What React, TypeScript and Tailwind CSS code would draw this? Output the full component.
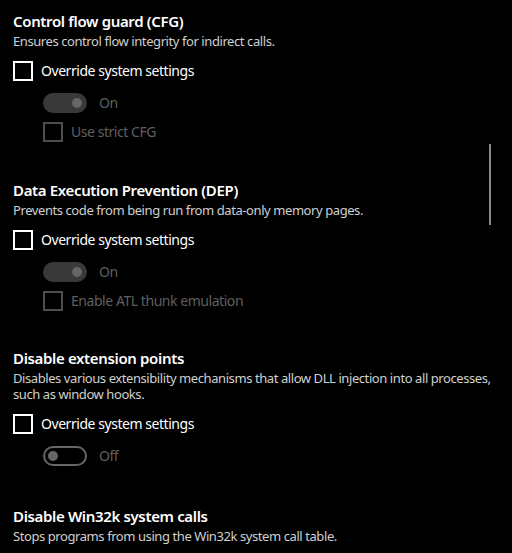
import React from "react";

interface Section {
  title: string;
  desc: string;
  toggleOn: boolean;
  sub?: string;
  gapTop: string;
}

const sections: Section[] = [
  {
    title: "Control flow guard (CFG)",
    desc: "Ensures control flow integrity for indirect calls.",
    toggleOn: true,
    sub: "Use strict CFG",
    gapTop: "mt-[11px]",
  },
  {
    title: "Data Execution Prevention (DEP)",
    desc: "Prevents code from being run from data-only memory pages.",
    toggleOn: true,
    sub: "Enable ATL thunk emulation",
    gapTop: "mt-[38px]",
  },
  {
    title: "Disable extension points",
    desc: "Disables various extensibility mechanisms that allow DLL injection into all processes, such as window hooks.",
    toggleOn: false,
    gapTop: "mt-[37px]",
  },
];

const Toggle: React.FC<{ on: boolean }> = ({ on }) =>
  on ? (
    <div className="flex h-5 w-11 items-center justify-end rounded-full bg-[#393939] pr-[5px]">
      <div className="h-[10px] w-[10px] rounded-full bg-[#666666]" />
    </div>
  ) : (
    <div className="flex h-5 w-11 items-center rounded-full border-2 border-[#666666] pl-[3px]">
      <div className="h-[10px] w-[10px] rounded-full bg-[#666666]" />
    </div>
  );

const SettingBlock: React.FC<{ s: Section }> = ({ s }) => (
  <div className={`${s.gapTop} flex flex-col`}>
    <h2 className="text-[15px] font-semibold leading-5 tracking-[-0.35px] text-white">{s.title}</h2>
    <p className="mt-[2px] max-w-[484px] text-[13px] leading-4 tracking-[-0.42px] text-[#d0d0d0]">{s.desc}</p>
    <label className="mt-3 flex items-center gap-2">
      <span className="h-5 w-5 border-2 border-white" />
      <span className="text-[14px] leading-5 tracking-[-0.45px] text-white">Override system settings</span>
    </label>
    <div className="ml-[30px] mt-3 flex items-center gap-3">
      <Toggle on={s.toggleOn} />
      <span className="text-[14px] leading-5 tracking-[-0.45px] text-[#5f5f5f]">{s.toggleOn ? "On" : "Off"}</span>
    </div>
    {s.sub && (
      <div className="ml-[30px] mt-[9px] flex items-center gap-2">
        <span className="h-5 w-5 border-2 border-[#4d4d4d]" />
        <span className="text-[14px] leading-5 tracking-[-0.45px] text-[#5f5f5f]">{s.sub}</span>
      </div>
    )}
  </div>
);

export default function App() {
  return (
    <div
      className="relative h-[553px] w-[512px] overflow-hidden bg-black pl-[13px]"
      style={{ fontFamily: "'Noto Sans', 'Open Sans', sans-serif" }}
    >
      {sections.map((s) => (
        <SettingBlock key={s.title} s={s} />
      ))}
      <div className="mt-[40px] flex flex-col">
        <h2 className="text-[15px] font-semibold leading-5 tracking-[-0.35px] text-white">Disable Win32k system calls</h2>
        <p className="mt-[2px] text-[13px] leading-4 tracking-[-0.42px] text-[#d0d0d0]">
          Stops programs from using the Win32k system call table.
        </p>
      </div>
      <div className="absolute left-[489px] top-[144px] h-[81px] w-[2px] bg-[#8a8a8a]" />
    </div>
  );
}
